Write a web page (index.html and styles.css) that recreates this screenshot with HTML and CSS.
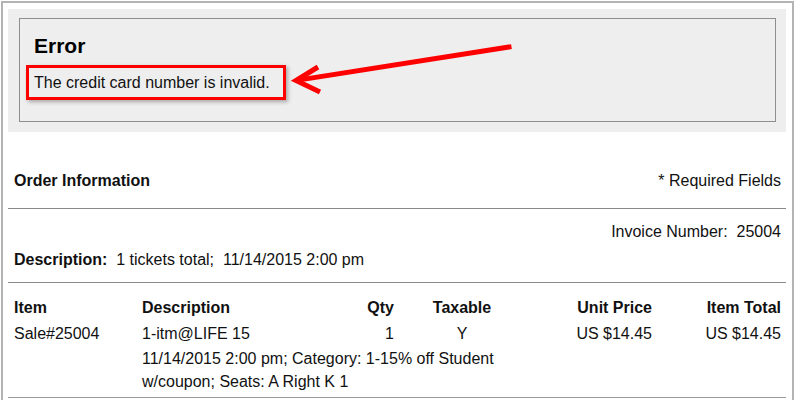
FILE: index.html
```html
<!DOCTYPE html>
<html lang="en">
<head>
  <meta charset="UTF-8">
  <meta name="viewport" content="width=device-width, initial-scale=1">
  <title>Checkout - Error</title>
  <link rel="stylesheet" href="styles.css">
</head>
<body>
  <div class="frame">

    <!-- Mensaje de error -->
    <div class="error-panel">
      <div class="error-box">
        <h2>Error</h2>
        <p class="error-msg">The credit card number is invalid.</p>
      </div>
      <svg class="arrow" viewBox="280 40 240 65" width="240" height="65">
        <line x1="509" y1="47" x2="299" y2="80" stroke="#f00" stroke-width="5" stroke-linecap="square"/>
        <polyline points="318,67 296,80.5 320,92" fill="none" stroke="#f00" stroke-width="5" stroke-linejoin="miter"/>
      </svg>
    </div>

    <!-- Información del pedido -->
    <div class="order-head">
      <h3>Order Information</h3>
      <span>* Required Fields</span>
    </div>

    <div class="order-meta">
      <div class="invoice">Invoice Number:&nbsp; 25004</div>
      <div><b>Description:</b>&nbsp; 1 tickets total;&nbsp; 11/14/2015 2:00 pm</div>
    </div>

    <div class="items">
      <div class="th">Item</div>
      <div class="th">Description</div>
      <div class="th right">Qty</div>
      <div class="th center">Taxable</div>
      <div class="th right">Unit Price</div>
      <div class="th right">Item Total</div>

      <div>Sale#25004</div>
      <div>1-itm@LIFE 15</div>
      <div class="right">1</div>
      <div class="center">Y</div>
      <div class="right">US $14.45</div>
      <div class="right">US $14.45</div>

      <div></div>
      <div class="item-detail">11/14/2015 2:00 pm; Category: 1-15% off Student w/coupon; Seats: A Right K 1</div>
    </div>

  </div>
</body>
</html>
```

FILE: styles.css
```css
/* Reset básico y tipografía */
* {
  box-sizing: border-box;
  margin: 0;
  padding: 0;
}

body {
  background-color: #fff;
  color: #111;
  font-family: 'Liberation Sans', Arial, sans-serif;
  font-size: 16px;
  line-height: 19px;
}

/* Marco exterior */
.frame {
  margin: 1px 0 0 1px;
  width: 793px;
  min-height: 420px;
  border: 2px solid #b4b4b4;
  border-bottom: none;
  padding: 6px 6px 0 5px;
}

/* Panel de error */
.error-panel {
  position: relative;
  background-color: #eee;
  padding: 9px 10px 10px 11px;
}

.error-box {
  border: 1px solid #8e8e8e;
  padding: 14px 14px 21px;
}

.error-box h2 {
  font-size: 21px;
  line-height: 25px;
  font-weight: bold;
  color: #000;
  margin-bottom: 7px;
}

.error-msg {
  display: inline-block;
  margin-left: -8px;
  border: 3px solid #f00;
  padding: 5px 13px 5px 5px;
  box-shadow: 2px 2px 4px rgba(0, 0, 0, 0.3);
}

.arrow {
  position: absolute;
  left: 272px;
  top: 31px;
}

/* Cabecera del pedido */
.order-head {
  display: flex;
  justify-content: space-between;
  padding: 39px 5px 18px 6px;
  border-bottom: 1px solid #8a8a8a;
}

.order-head h3 {
  font-size: 16px;
  font-weight: bold;
}

.order-meta {
  display: flex;
  flex-direction: column;
  gap: 9px;
  padding: 13px 5px 13px 6px;
  border-bottom: 1px solid #8a8a8a;
}

.invoice {
  text-align: right;
}

/* Tabla de artículos */
.items {
  display: grid;
  grid-template-columns: 128px 202px 50px 136px 122px 129px;
  padding: 12px 5px 4px 6px;
  line-height: 26px;
  border-bottom: 1px solid #999;
}

.items .th {
  font-weight: bold;
}

.right {
  text-align: right;
}

.center {
  text-align: center;
}

.item-detail {
  grid-column: 2 / 5;
  line-height: 23px;
}
```
